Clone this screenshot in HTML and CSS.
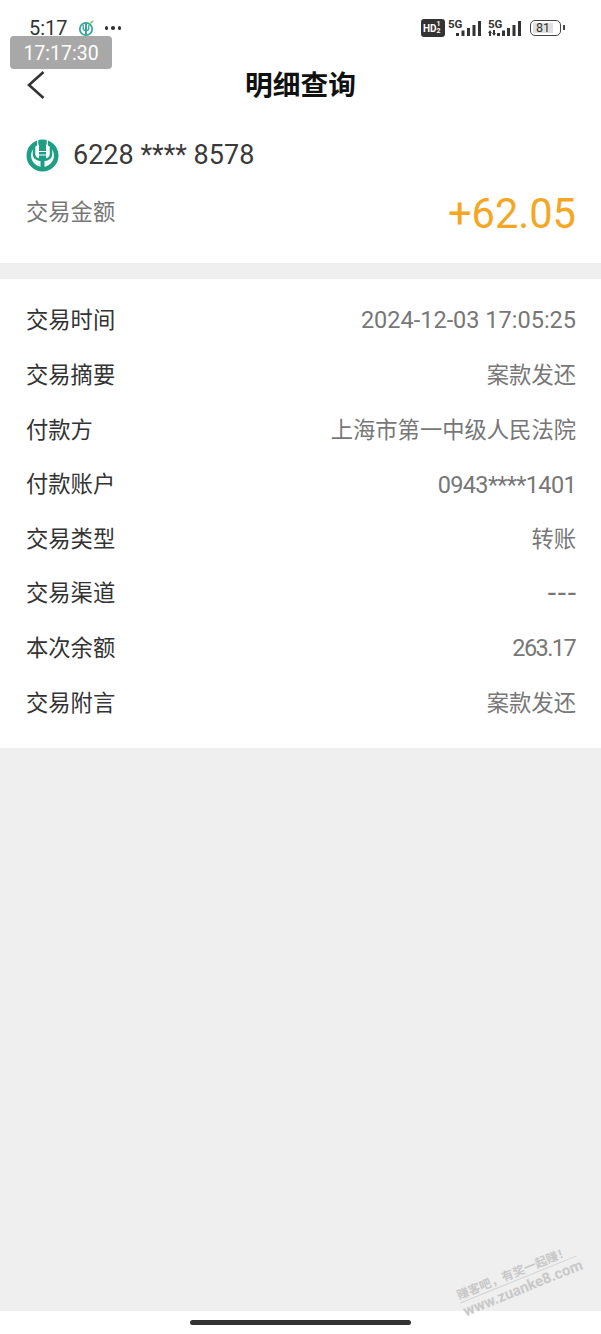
FILE: index.html
```html
<!DOCTYPE html>
<html lang="zh-CN">
<head>
    <meta charset="UTF-8">
    <meta name="viewport" content="width=device-width, initial-scale=1.0">
    <title>明细查询</title>
    <link rel="stylesheet" href="styles.css">
</head>
<body>
    <div class="page">
        <div class="status-bar">
            <div class="status-left">
                <span class="clock">5:17</span>
                <svg class="app-dot" width="18" height="18" viewBox="0 0 18 18">
                    <circle cx="8" cy="10" r="6.200" fill="none" stroke="#3aa79b" stroke-width="1.800"/>
                    <path d="M5.200 6v3.500q0 2 2.800 2t2.800-2V6" fill="none" stroke="#3aa79b" stroke-width="1.300"/>
                    <path d="M8 4v12" stroke="#3aa79b" stroke-width="2"/>
                    <path d="M11.500 5q.5-3 4-4q0 3.500-4 4z" fill="#8fd06a"/>
                </svg>
                <span class="dots"><i></i><i></i><i></i></span>
            </div>
            <div class="status-right">
                <span class="hd">HD<span class="hd-sub">1<br>2</span></span>
                <span class="signal">
                    <span class="net">5G</span>
                    <svg width="25" height="16" viewBox="0 0 25 16"><path d="M0 13h3v3H0zM5.500 10.500h3V16h-3zM11 8h3v8h-3zM16.500 5h3v11h-3zM22 1h3v15h-3z" fill="#333"/></svg>
                </span>
                <span class="signal signal-data">
                    <span class="net">5G</span>
                    <svg width="33" height="16" viewBox="0 0 33 16"><path d="M2 10l2 3H3v3H1v-3H0zM6 16l-2-3h1v-3h2v3h1zM9 13h3v3H9zM14 10.500h3V16h-3zM19 8h3v8h-3zM24.500 5h3v11h-3zM30 1h3v15h-3z" fill="#333"/></svg>
                </span>
                <span class="battery"><span class="battery-num">81</span></span>
                <span class="battery-tip"></span>
            </div>
        </div>

        <div class="time-stamp">17:17:30</div>

        <div class="nav-bar">
            <svg class="back" width="20" height="30" viewBox="0 0 20 30">
                <path d="M17.500 2L3 15l14.500 13" fill="none" stroke="#333" stroke-width="2.600"/>
            </svg>
            <h1>明细查询</h1>
        </div>

        <div class="summary">
            <div class="account">
                <svg class="bank-logo" width="33" height="33" viewBox="0 0 33 33">
                    <circle cx="16.500" cy="16.500" r="13.700" fill="none" stroke="#1d9f85" stroke-width="4.600"/>
                    <path d="M11.600 0v9M21.400 0v9" stroke="#fff" stroke-width="1.300"/>
                    <path d="M8 8v7q0 6 8.500 6T25 15V8" fill="none" stroke="#1d9f85" stroke-width="2.500"/>
                    <rect x="13" y="1.500" width="7" height="19" fill="#1d9f85"/>
                    <rect x="14.500" y="19" width="4" height="12" fill="#1d9f85"/>
                    <path d="M12.500 12.500h8M12.500 16h8" stroke="#fff" stroke-width="1.100"/>
                </svg>
                <span class="card-no">6228 **** 8578</span>
            </div>
            <div class="amount-row">
                <span class="amount-label">交易金额</span>
                <span class="amount">+62.05</span>
            </div>
        </div>

        <div class="details">
            <div class="row"><span>交易时间</span><span class="val val-num">2024-12-03 17:05:25</span></div>
            <div class="row"><span>交易摘要</span><span class="val">案款发还</span></div>
            <div class="row"><span>付款方</span><span class="val">上海市第一中级人民法院</span></div>
            <div class="row"><span>付款账户</span><span class="val val-num val-account">0943****1401</span></div>
            <div class="row"><span>交易类型</span><span class="val">转账</span></div>
            <div class="row"><span>交易渠道</span><span class="val val-num val-empty">---</span></div>
            <div class="row"><span>本次余额</span><span class="val val-num val-balance">263.17</span></div>
            <div class="row"><span>交易附言</span><span class="val">案款发还</span></div>
        </div>

        <div class="filler"></div>

        <div class="home-area"><span class="home-bar"></span></div>

        <div class="watermark">
            <div class="wm-top">赚客吧，有奖一起赚！</div>
            <div class="wm-url">www.zuanke8.com</div>
        </div>
    </div>
</body>
</html>
```

FILE: styles.css
```css
* {
    margin: 0;
    padding: 0;
    box-sizing: border-box;
}

body {
    font-family: Roboto, "Noto Sans CJK SC", sans-serif;
    background: #efefef;
}

.page {
    position: relative;
    width: 601px;
    height: 1334px;
    display: flex;
    flex-direction: column;
    overflow: hidden;
}

/* status bar */
.status-bar {
    height: 56px;
    background: #fff;
    display: flex;
    justify-content: space-between;
    align-items: flex-start;
    padding: 17px 36px 0 29px;
}

.status-left {
    display: flex;
    align-items: center;
    gap: 9px;
}

.clock {
    font-size: 20px;
    line-height: 22px;
    color: #333;
}

.app-dot {
    margin-left: 1px;
}

.dots {
    display: flex;
    gap: 3px;
    margin-left: 0;
}

.dots i {
    width: 3.500px;
    height: 3.500px;
    border-radius: 50%;
    background: #333;
}

.status-right {
    display: flex;
    align-items: flex-start;
    padding-top: 2px;
}

.hd {
    display: flex;
    align-items: center;
    width: 24px;
    height: 18px;
    padding-left: 2px;
    background: #333;
    border-radius: 3px;
    color: #fff;
    font-size: 10px;
    font-weight: 700;
}

.hd-sub {
    font-size: 7px;
    line-height: 7px;
    text-align: center;
}

.signal {
    display: flex;
    justify-content: flex-end;
    width: 33px;
    height: 17px;
    margin-left: 3px;
    padding-top: 1px;
}

.signal-data {
    margin-left: 7px;
}

.net {
    width: 0;
    margin-right: auto;
    font-size: 11.500px;
    line-height: 11px;
    font-weight: 700;
    color: #333;
    margin-top: -1px;
}

.battery {
    width: 31px;
    height: 16px;
    margin: 1px 0 0 9px;
    padding: 2px;
    border: 1.500px solid #444;
    border-radius: 5px;
    display: flex;
}

.battery-num {
    width: 81%;
    background: #e0e0e0;
    font-size: 12.500px;
    line-height: 10px;
    text-align: center;
    color: #333;
}

.battery-tip {
    width: 2px;
    height: 5px;
    margin: 6px 0 0 2px;
    background: #444;
}

/* screenshot clock overlay */
.time-stamp {
    position: absolute;
    z-index: 2;
    left: 10px;
    top: 36px;
    width: 102px;
    height: 33px;
    padding-top: 1px;
    background: #a8a8a8;
    border-radius: 4px;
    color: #fff;
    font-size: 19.500px;
    line-height: 33px;
    text-align: center;
}

.nav-bar {
    height: 56px;
    padding-bottom: 2px;
    background: #fff;
    display: flex;
    align-items: center;
    justify-content: center;
    position: relative;
}

.nav-bar h1 {
    font-size: 27.700px;
    font-weight: 700;
    color: #111;
}

.back {
    position: absolute;
    left: 26px;
    top: 14px;
}

/* card and amount */
.summary {
    height: 151px;
    background: #fff;
    padding: 0 25px 0 26px;
}

.account {
    display: flex;
    align-items: center;
    gap: 14px;
    padding-top: 22px;
    height: 64px;
}

.card-no {
    font-size: 27px;
    color: #3a3a3a;
}

.amount-row {
    display: flex;
    justify-content: space-between;
    align-items: center;
    height: 74px;
}

.amount-label {
    font-size: 22.300px;
    color: #777;
    margin-bottom: 6px;
}

.amount {
    font-size: 41.600px;
    color: #f5a623;
}

/* detail rows */
.details {
    margin-top: 16px;
    height: 469px;
    background: #fff;
    padding: 12px 25px 20px 26px;
    display: flex;
    flex-direction: column;
    justify-content: space-between;
}

.row {
    display: flex;
    justify-content: space-between;
    align-items: center;
    height: 55px;
    font-size: 22.300px;
    color: #333;
}

.val {
    color: #777;
}

.val-num {
    font-size: 23.500px;
    padding-top: 4px;
}

.val-account {
    letter-spacing: -0.650px;
    padding-top: 6px;
}

.val-balance {
    letter-spacing: -1.600px;
    margin-right: 1px;
}

.val-empty {
    font-size: 30px;
    line-height: 30px;
    letter-spacing: 1.700px;
    margin-right: -1.700px;
}

.filler {
    flex: 1;
}

.home-area {
    height: 23px;
    background: #fff;
    display: flex;
    justify-content: center;
    align-items: flex-end;
    padding-bottom: 9px;
}

.home-bar {
    width: 221px;
    height: 5px;
    border-radius: 3px;
    background: #333;
}

/* site watermark */
.watermark {
    position: absolute;
    left: 456px;
    top: 1262px;
    width: 125px;
    transform: rotate(-22deg);
    color: #c8c8c8;
}

.wm-top {
    font-size: 12px;
    font-weight: 700;
    white-space: nowrap;
    border-bottom: 1px solid #d4d4d4;
}

.wm-url {
    font-size: 15px;
    font-weight: 700;
    white-space: nowrap;
}
```
